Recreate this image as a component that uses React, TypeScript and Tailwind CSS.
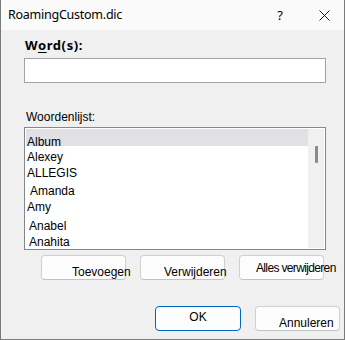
import React from "react";

const rows: { t: string; h: number; pl: number }[] = [
  { t: "Alexey", h: 16, pl: 1 },
  { t: "ALLEGIS", h: 18, pl: 1 },
  { t: "Amanda", h: 16, pl: 4 },
  { t: "Amy", h: 19, pl: 1 },
  { t: "Anabel", h: 16, pl: 3 },
  { t: "Anahita", h: 16, pl: 3 },
];

export default function App() {
  return (
    <div className="w-[345px] h-[340px] bg-[#f0f0f0] border-x border-b border-[#7a7a7a] flex flex-col text-black overflow-hidden">
      {/* title bar */}
      <div className="h-[30px] shrink-0 bg-[#fafafa] flex items-center pl-[7px] pr-[14px] font-['Noto_Sans',sans-serif] text-[12.5px]">
        <span className="leading-[18px] tracking-[-0.25px]">RoamingCustom.dic</span>
        <div className="flex-1" />
        <span className="leading-[18px] text-[13px]">?</span>
        <svg width="11" height="11" viewBox="0 0 11 11" className="ml-[36px]">
          <path d="M0.5 0.5 L10.5 10.5 M10.5 0.5 L0.5 10.5" stroke="#1a1a1a" strokeWidth="1" fill="none" />
        </svg>
      </div>

      {/* body */}
      <div className="flex flex-col pl-[23px] pt-[7px]">
        <div className="pl-[1px] font-['Noto_Sans',sans-serif] text-[13px] font-bold leading-[16px] tracking-[0.6px]">
          W<span className="underline underline-offset-2">o</span>rd(s):
        </div>
        <div className="mt-[5px] w-[302px] h-[25px] border border-[#a3a3a3] bg-white" />

        <div className="mt-[27px] pl-[2px] font-['Liberation_Sans',Arial,sans-serif] text-[12px] leading-[15px]">
          Woordenlijst:
        </div>

        <div className="mt-[2px] w-[302px] h-[123px] border border-[#828790] bg-white p-[1px] flex font-['Liberation_Sans',Arial,sans-serif] text-[12px] leading-[15px]">
          <div className="flex-1 flex flex-col overflow-hidden">
            <div className="h-[17px] shrink-0 bg-[#e1e0e5] pl-[1px] pt-[6px] whitespace-nowrap">
              Album
            </div>
            <div className="pt-[4px] flex flex-col">
              {rows.map((r) => (
                <div
                  key={r.t}
                  className="shrink-0 whitespace-nowrap"
                  style={{ height: r.h, paddingLeft: r.pl }}
                >
                  {r.t}
                </div>
              ))}
            </div>
          </div>
          <div className="w-[16px] h-full bg-[#f0f0f0] pl-[7px] pt-[17px]">
            <div className="w-[3px] h-[17px] bg-[#8a8a8a] rounded-[1px]" />
          </div>
        </div>

        {/* buttons row 1 */}
        <div className="mt-[5px] pl-[17px] flex gap-[14px] font-['Liberation_Sans',Arial,sans-serif] text-[12px] leading-[15px]">
          <div className="w-[85px] h-[25px] rounded-[4px] border border-[#d0d0d0] border-b-[#c2c2c2] bg-[#fdfdfd] pl-[30px] pt-[9px] whitespace-nowrap">
            Toevoegen
          </div>
          <div className="w-[85px] h-[25px] rounded-[4px] border border-[#d0d0d0] border-b-[#c2c2c2] bg-[#fdfdfd] pl-[23px] pt-[9px] whitespace-nowrap">
            Verwijderen
          </div>
          <div className="w-[85px] h-[25px] rounded-[4px] border border-[#d0d0d0] border-b-[#c2c2c2] bg-[#fdfdfd] pl-[16px] pt-[5px] whitespace-nowrap tracking-[-0.65px]">
            Alles verwijderen
          </div>
        </div>

        {/* buttons row 2 */}
        <div className="mt-[26px] pl-[131px] flex gap-[14px] font-['Liberation_Sans',Arial,sans-serif] text-[12px] leading-[15px]">
          <div className="w-[86px] h-[25px] rounded-[4px] border border-[#0067c0] bg-[#fdfdfd] pt-[3px] text-center">
            OK
          </div>
          <div className="w-[85px] h-[25px] rounded-[4px] border border-[#d0d0d0] border-b-[#c2c2c2] bg-[#fdfdfd] pl-[23px] pt-[9px] whitespace-nowrap">
            Annuleren
          </div>
        </div>
      </div>
    </div>
  );
}
